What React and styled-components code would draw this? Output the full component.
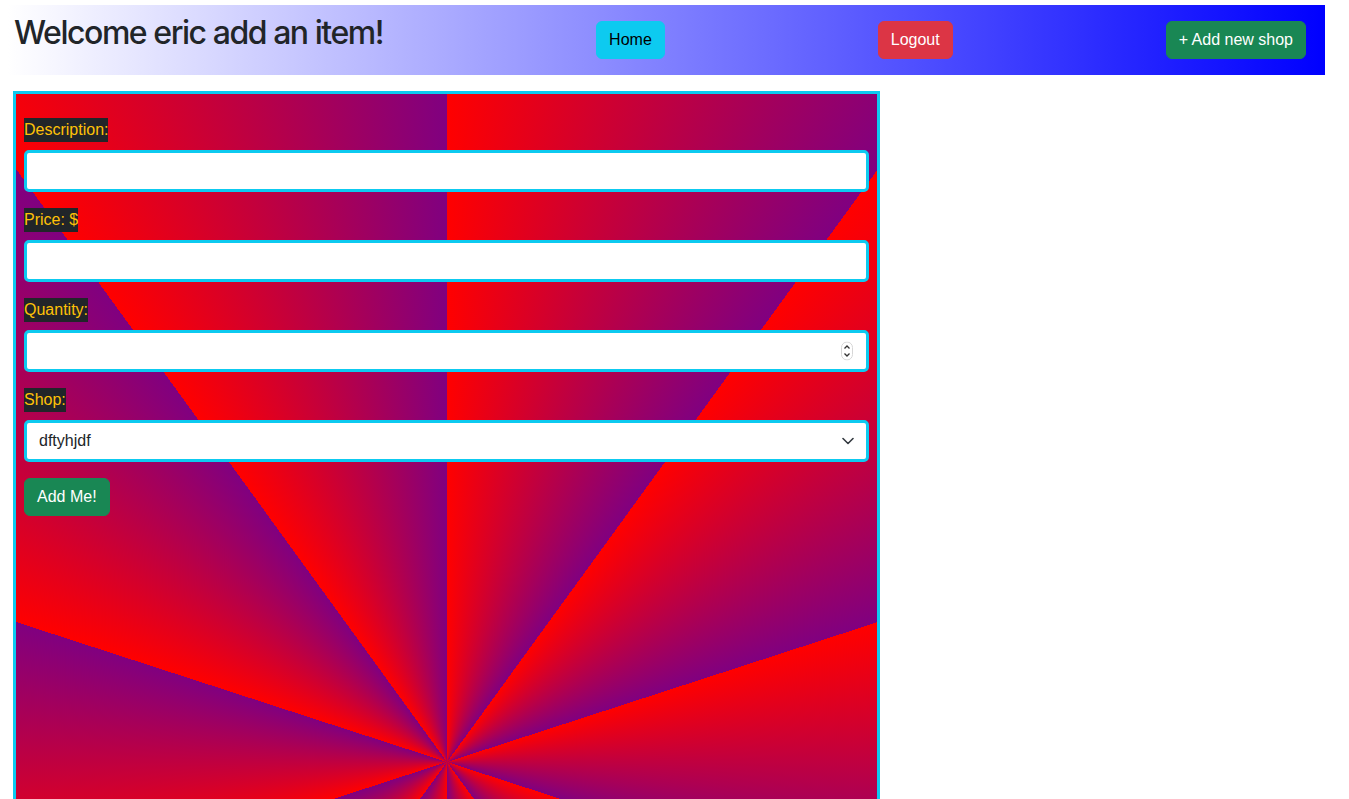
import React from "react";
import styled, { createGlobalStyle } from "styled-components";

const GlobalStyle = createGlobalStyle`
  html, body {
    margin: 0;
    overflow: hidden;
    background: #fff;
  }
  body {
    font-family: "Liberation Sans", Arial, sans-serif;
    font-size: 16px;
    line-height: 1.5;
    color: #212529;
  }
  * {
    box-sizing: border-box;
  }
`;

const Page = styled.div`
  padding: 5px 24px 0 8px;
`;

const Header = styled.header`
  display: flex;
  align-items: center;
  justify-content: space-between;
  height: 70px;
  padding: 0 19px 0 6px;
  background: linear-gradient(to right, #ffffff, #0000ff);
`;

const Title = styled.h2`
  margin: 0 0 14px;
  font-family: Inter, "Liberation Sans", sans-serif;
  font-size: 32px;
  font-weight: 500;
  line-height: 1.2;
  letter-spacing: -1.45px;
  color: #212529;
`;

const Btn = styled.button`
  display: inline-block;
  height: 38px;
  padding: 6px 12px;
  border: 1px solid ${(p) => p.$bg};
  border-radius: 6px;
  background: ${(p) => p.$bg};
  color: ${(p) => p.$color || "#fff"};
  font-family: inherit;
  font-size: 16px;
  line-height: 1.5;
  cursor: pointer;
`;

const FormPanel = styled.form`
  width: 867px;
  height: 1400px;
  margin: 16px 0 0 5px;
  padding: 24px 8px 8px;
  border: 3px solid #0dcaf0;
  background: repeating-conic-gradient(
    from 0deg at 431px 668px,
    #ff0000 0deg,
    #800080 36deg
  );
`;

const Field = styled.div`
  margin-bottom: 16px;
`;

const Label = styled.label`
  display: inline-block;
  margin-bottom: 8px;
  background: #212529;
  color: #ffc107;
  font-size: 16px;
  line-height: 24px;
`;

const Control = styled.div`
  position: relative;
`;

const Input = styled.input`
  display: block;
  width: 100%;
  height: 42px;
  padding: 6px 12px;
  border: 3px solid #0dcaf0;
  border-radius: 5px;
  background: #fff;
  color: #212529;
  font-family: inherit;
  font-size: 16px;
  line-height: 1.5;
  outline: none;
  appearance: textfield;
  &::-webkit-inner-spin-button,
  &::-webkit-outer-spin-button {
    -webkit-appearance: none;
    margin: 0;
  }
`;

const Select = styled.select`
  display: block;
  width: 100%;
  height: 42px;
  padding: 6px 36px 6px 12px;
  border: 3px solid #0dcaf0;
  border-radius: 5px;
  background: #fff;
  color: #212529;
  font-family: inherit;
  font-size: 16px;
  line-height: 1.5;
  appearance: none;
  outline: none;
`;

const ControlIcon = styled.svg`
  position: absolute;
  top: 50%;
  right: ${(p) => p.$right}px;
  transform: translateY(-50%);
  pointer-events: none;
`;

const Spinner = () => (
  <ControlIcon $right={16} width="12" height="19" viewBox="0 0 12 19">
    <rect x="0.5" y="0.5" width="11" height="18" rx="5.5" fill="#fff" stroke="#d6d6d6" />
    <path d="M3.5 7 L6 4.5 L8.5 7" fill="none" stroke="#333" strokeWidth="1.3" />
    <path d="M3.5 12 L6 14.5 L8.5 12" fill="none" stroke="#333" strokeWidth="1.3" />
  </ControlIcon>
);

const Chevron = () => (
  <ControlIcon $right={15} width="12" height="8" viewBox="0 0 12 8">
    <path d="M1 1.5 L6 6.5 L11 1.5" fill="none" stroke="#343a40" strokeWidth="1.6" strokeLinecap="round" strokeLinejoin="round" />
  </ControlIcon>
);

export default function App() {
  return (
    <>
      <GlobalStyle />
      <Page>
        <Header>
          <Title>Welcome eric add an item!</Title>
          <Btn $bg="#0dcaf0" $color="#000">Home</Btn>
          <Btn $bg="#dc3545">Logout</Btn>
          <Btn $bg="#198754">+ Add new shop</Btn>
        </Header>
        <FormPanel onSubmit={(e) => e.preventDefault()}>
          <Field>
            <Label htmlFor="description">Description:</Label>
            <Input id="description" type="text" />
          </Field>
          <Field>
            <Label htmlFor="price">Price: $</Label>
            <Input id="price" type="text" />
          </Field>
          <Field>
            <Label htmlFor="quantity">Quantity:</Label>
            <Control>
              <Input id="quantity" type="number" />
              <Spinner />
            </Control>
          </Field>
          <Field>
            <Label htmlFor="shop">Shop:</Label>
            <Control>
              <Select id="shop" defaultValue="dftyhjdf">
                <option value="dftyhjdf">dftyhjdf</option>
              </Select>
              <Chevron />
            </Control>
          </Field>
          <Btn type="submit" $bg="#198754">Add Me!</Btn>
        </FormPanel>
      </Page>
    </>
  );
}
